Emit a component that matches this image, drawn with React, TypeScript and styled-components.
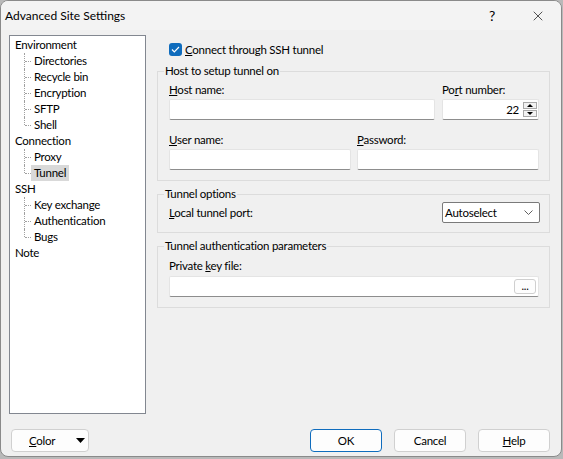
import React from 'react';
import styled, { createGlobalStyle } from 'styled-components';
import { X } from 'lucide-react';

const GlobalStyle = createGlobalStyle`
  html, body {
    margin: 0;
    padding: 0;
    background: #b9b9b9;
  }
  body {
    font-family: Lato, "Noto Sans", sans-serif;
    font-size: 11.5px;
    letter-spacing: -0.25px;
    color: #000;
  }
`;

const Window = styled.div`
  width: 562px;
  height: 457px;
  box-sizing: border-box;
  border: 1px solid #8a8a8a;
  border-radius: 8px;
  background: #f0f0f0;
  display: flex;
  flex-direction: column;
  overflow: hidden;
`;

const TitleBar = styled.div`
  height: 29px;
  display: flex;
  align-items: center;
  padding-left: 4px;
  background: #f3f3f3;
`;

const Title = styled.div`
  flex: 1;
  font-size: 12px;
  letter-spacing: 0;
`;

const TitleButton = styled.div`
  width: 46px;
  height: 29px;
  display: flex;
  align-items: center;
  justify-content: center;
  font-size: 14px;
`;

const Main = styled.div`
  display: flex;
  gap: 11px;
  padding: 5px 11px 0 8px;
`;

const Tree = styled.ul`
  width: 137px;
  height: 379px;
  box-sizing: border-box;
  margin: 0;
  padding: 1px 0 0 0;
  list-style: none;
  border: 1px solid #828790;
  background: #fff;
`;

const TreeRow = styled.li`
  height: 16px;
  line-height: 16px;
  padding-left: 5px;
  white-space: nowrap;
`;

const ChildRow = styled.li<{ $last: boolean }>`
  position: relative;
  height: 16px;
  line-height: 16px;
  padding-left: 21px;
  white-space: nowrap;

  &::before {
    content: '';
    position: absolute;
    left: 14px;
    top: 0;
    height: ${(p) => (p.$last ? '8px' : '16px')};
    border-left: 1px dotted #a0a0a0;
  }
  &::after {
    content: '';
    position: absolute;
    left: 15px;
    top: 8px;
    width: 6px;
    border-top: 1px dotted #a0a0a0;
  }
`;

const ChildLabel = styled.span<{ $selected?: boolean }>`
  display: inline-block;
  padding: 0 3px;
  background: ${(p) => (p.$selected ? '#d9d9d9' : 'transparent')};
`;

const ChildList = styled.ul`
  margin: 0;
  padding: 0;
  list-style: none;
`;

const Panel = styled.div`
  width: 393px;
  display: flex;
  flex-direction: column;
  gap: 5px;
`;

const CheckRow = styled.label`
  display: flex;
  align-items: center;
  gap: 3px;
  height: 16px;
  margin: 6px 0 1px 12px;
`;

const CheckBox = styled.span`
  width: 13px;
  height: 13px;
  border-radius: 3px;
  background: #0f6cbd;
  display: flex;
  align-items: center;
  justify-content: center;
`;

const Group = styled.fieldset<{ $pt: number; $pb: number }>`
  margin: 0;
  min-width: 0;
  border: 1px solid #dcdcdc;
  padding: ${(p) => p.$pt}px 10px ${(p) => p.$pb}px 11px;
`;

const Legend = styled.legend`
  margin-left: -5px;
  padding: 0 1px;
  line-height: 16px;
`;

const FieldRow = styled.div<{ $gap: number; $mt?: number }>`
  display: flex;
  gap: ${(p) => p.$gap}px;
  margin-top: ${(p) => p.$mt || 0}px;
`;

const Field = styled.div<{ $width?: number }>`
  display: flex;
  flex-direction: column;
  flex: ${(p) => (p.$width ? `0 0 ${p.$width}px` : '1 1 0')};
  min-width: 0;
`;

const Label = styled.div<{ $mb?: number }>`
  line-height: 16px;
  margin-bottom: ${(p) => (p.$mb === undefined ? 1 : p.$mb)}px;
  white-space: nowrap;
`;

const EditFrame = styled.div`
  height: 21px;
  box-sizing: border-box;
  display: flex;
  align-items: center;
  background: #fff;
  border: 1px solid #e4e4e4;
  border-bottom-color: #8d8d8d;
  border-radius: 2px;
`;

const EditInput = styled.input<{ $right?: boolean }>`
  flex: 1;
  min-width: 0;
  height: 100%;
  box-sizing: border-box;
  border: none;
  outline: none;
  background: transparent;
  padding: 0 4px;
  font: inherit;
  letter-spacing: inherit;
  text-align: ${(p) => (p.$right ? 'right' : 'left')};
`;

const Spinner = styled.div`
  display: flex;
  flex-direction: column;
  margin-right: 1px;
`;

const SpinButton = styled.div`
  width: 14px;
  height: 7px;
  box-sizing: border-box;
  border: 1px solid #a8a8a8;
  background: #f2f2f2;
  display: flex;
  align-items: center;
  justify-content: center;
  & + & {
    margin-top: 1px;
  }
`;

const OptionRow = styled.div`
  display: flex;
  align-items: center;
  justify-content: space-between;
`;

const Combo = styled.div`
  width: 98px;
  height: 21px;
  box-sizing: border-box;
  margin-right: -1px;
  border: 1px solid #7a7a7a;
  border-radius: 2px;
  background: #fff;
  display: flex;
  align-items: center;
  justify-content: space-between;
  padding: 0 6px 0 2px;
`;

const BrowseButton = styled.div`
  width: 22px;
  height: 15px;
  box-sizing: border-box;
  margin-right: 2px;
  border: 1px solid #cfcfcf;
  border-radius: 3px;
  background: #fdfdfd;
  display: flex;
  align-items: center;
  justify-content: center;
  font-size: 11px;
  line-height: 9px;
  padding-bottom: 3px;
`;

const Footer = styled.div`
  display: flex;
  align-items: center;
  gap: 12px;
  padding: 15px 11px 0 10px;
`;

const Button = styled.button<{ $default?: boolean; $width?: number }>`
  width: ${(p) => p.$width || 72}px;
  height: 23px;
  box-sizing: border-box;
  border: 1px solid ${(p) => (p.$default ? '#0f6cbd' : '#d0d0d0')};
  border-radius: 4px;
  background: #fdfdfd;
  font: inherit;
  letter-spacing: inherit;
  color: #000;
  padding: 0;
  display: flex;
  align-items: center;
  justify-content: center;
`;

const SplitButton = styled(Button)`
  justify-content: space-between;
  padding: 0 3px 0 17px;
  margin-right: auto;
`;

const Key = styled.span`
  text-decoration: underline;
`;

const tree = [
  { label: 'Environment', children: ['Directories', 'Recycle bin', 'Encryption', 'SFTP', 'Shell'] },
  { label: 'Connection', children: ['Proxy', 'Tunnel'] },
  { label: 'SSH', children: ['Key exchange', 'Authentication', 'Bugs'] },
  { label: 'Note', children: [] as string[] },
];

const Triangle = ({ up }: { up: boolean }) => (
  <svg width="6" height="3" viewBox="0 0 6 3">
    <polygon points={up ? '0,3 6,3 3,0' : '0,0 6,0 3,3'} fill="#000" />
  </svg>
);

export default function App() {
  return (
    <>
      <GlobalStyle />
      <Window>
        <TitleBar>
          <Title>Advanced Site Settings</Title>
          <TitleButton>?</TitleButton>
          <TitleButton>
            <X size={16} strokeWidth={1} />
          </TitleButton>
        </TitleBar>

        <Main>
          <Tree>
            {tree.map((node) => (
              <React.Fragment key={node.label}>
                <TreeRow>{node.label}</TreeRow>
                {node.children.length > 0 && (
                  <li>
                    <ChildList>
                      {node.children.map((c, i) => (
                        <ChildRow key={c} $last={i === node.children.length - 1}>
                          <ChildLabel $selected={c === 'Tunnel'}>{c}</ChildLabel>
                        </ChildRow>
                      ))}
                    </ChildList>
                  </li>
                )}
              </React.Fragment>
            ))}
          </Tree>

          <Panel>
            <CheckRow>
              <CheckBox>
                <svg width="9" height="7" viewBox="0 0 9 7">
                  <polyline points="1,3.5 3.3,5.8 8,1" fill="none" stroke="#fff" strokeWidth="1.2" />
                </svg>
              </CheckBox>
              <span>
                <Key>C</Key>onnect through SSH tunnel
              </span>
            </CheckRow>

            <Group $pt={3} $pb={10}>
              <Legend>Host to setup tunnel on</Legend>
              <FieldRow $gap={7}>
                <Field>
                  <Label>
                    <Key>H</Key>ost name:
                  </Label>
                  <EditFrame>
                    <EditInput />
                  </EditFrame>
                </Field>
                <Field $width={97}>
                  <Label>
                    Po<Key>r</Key>t number:
                  </Label>
                  <EditFrame>
                    <EditInput $right defaultValue="22" />
                    <Spinner>
                      <SpinButton>
                        <Triangle up />
                      </SpinButton>
                      <SpinButton>
                        <Triangle up={false} />
                      </SpinButton>
                    </Spinner>
                  </EditFrame>
                </Field>
              </FieldRow>
              <FieldRow $gap={6} $mt={12}>
                <Field>
                  <Label>
                    <Key>U</Key>ser name:
                  </Label>
                  <EditFrame>
                    <EditInput />
                  </EditFrame>
                </Field>
                <Field>
                  <Label>
                    <Key>P</Key>assword:
                  </Label>
                  <EditFrame>
                    <EditInput type="password" />
                  </EditFrame>
                </Field>
              </FieldRow>
            </Group>

            <Group $pt={0} $pb={9}>
              <Legend>Tunnel options</Legend>
              <OptionRow>
                <Label $mb={0}>
                  <Key>L</Key>ocal tunnel port:
                </Label>
                <Combo>
                  <span>Autoselect</span>
                  <svg width="9" height="5" viewBox="0 0 9 5">
                    <polyline points="0.5,0.5 4.5,4.5 8.5,0.5" fill="none" stroke="#606060" strokeWidth="1" />
                  </svg>
                </Combo>
              </OptionRow>
            </Group>

            <Group $pt={4} $pb={10}>
              <Legend>Tunnel authentication parameters</Legend>
              <Label $mb={2}>
                Private <Key>k</Key>ey file:
              </Label>
              <EditFrame>
                <EditInput />
                <BrowseButton>...</BrowseButton>
              </EditFrame>
            </Group>
          </Panel>
        </Main>

        <Footer>
          <SplitButton $width={78}>
            <span>
              <Key>C</Key>olor
            </span>
            <svg width="9" height="5" viewBox="0 0 9 5">
              <polygon points="0,0 9,0 4.5,5" fill="#000" />
            </svg>
          </SplitButton>
          <Button $default>OK</Button>
          <Button>Cancel</Button>
          <Button>
            <span>
              <Key>H</Key>elp
            </span>
          </Button>
        </Footer>
      </Window>
    </>
  );
}
